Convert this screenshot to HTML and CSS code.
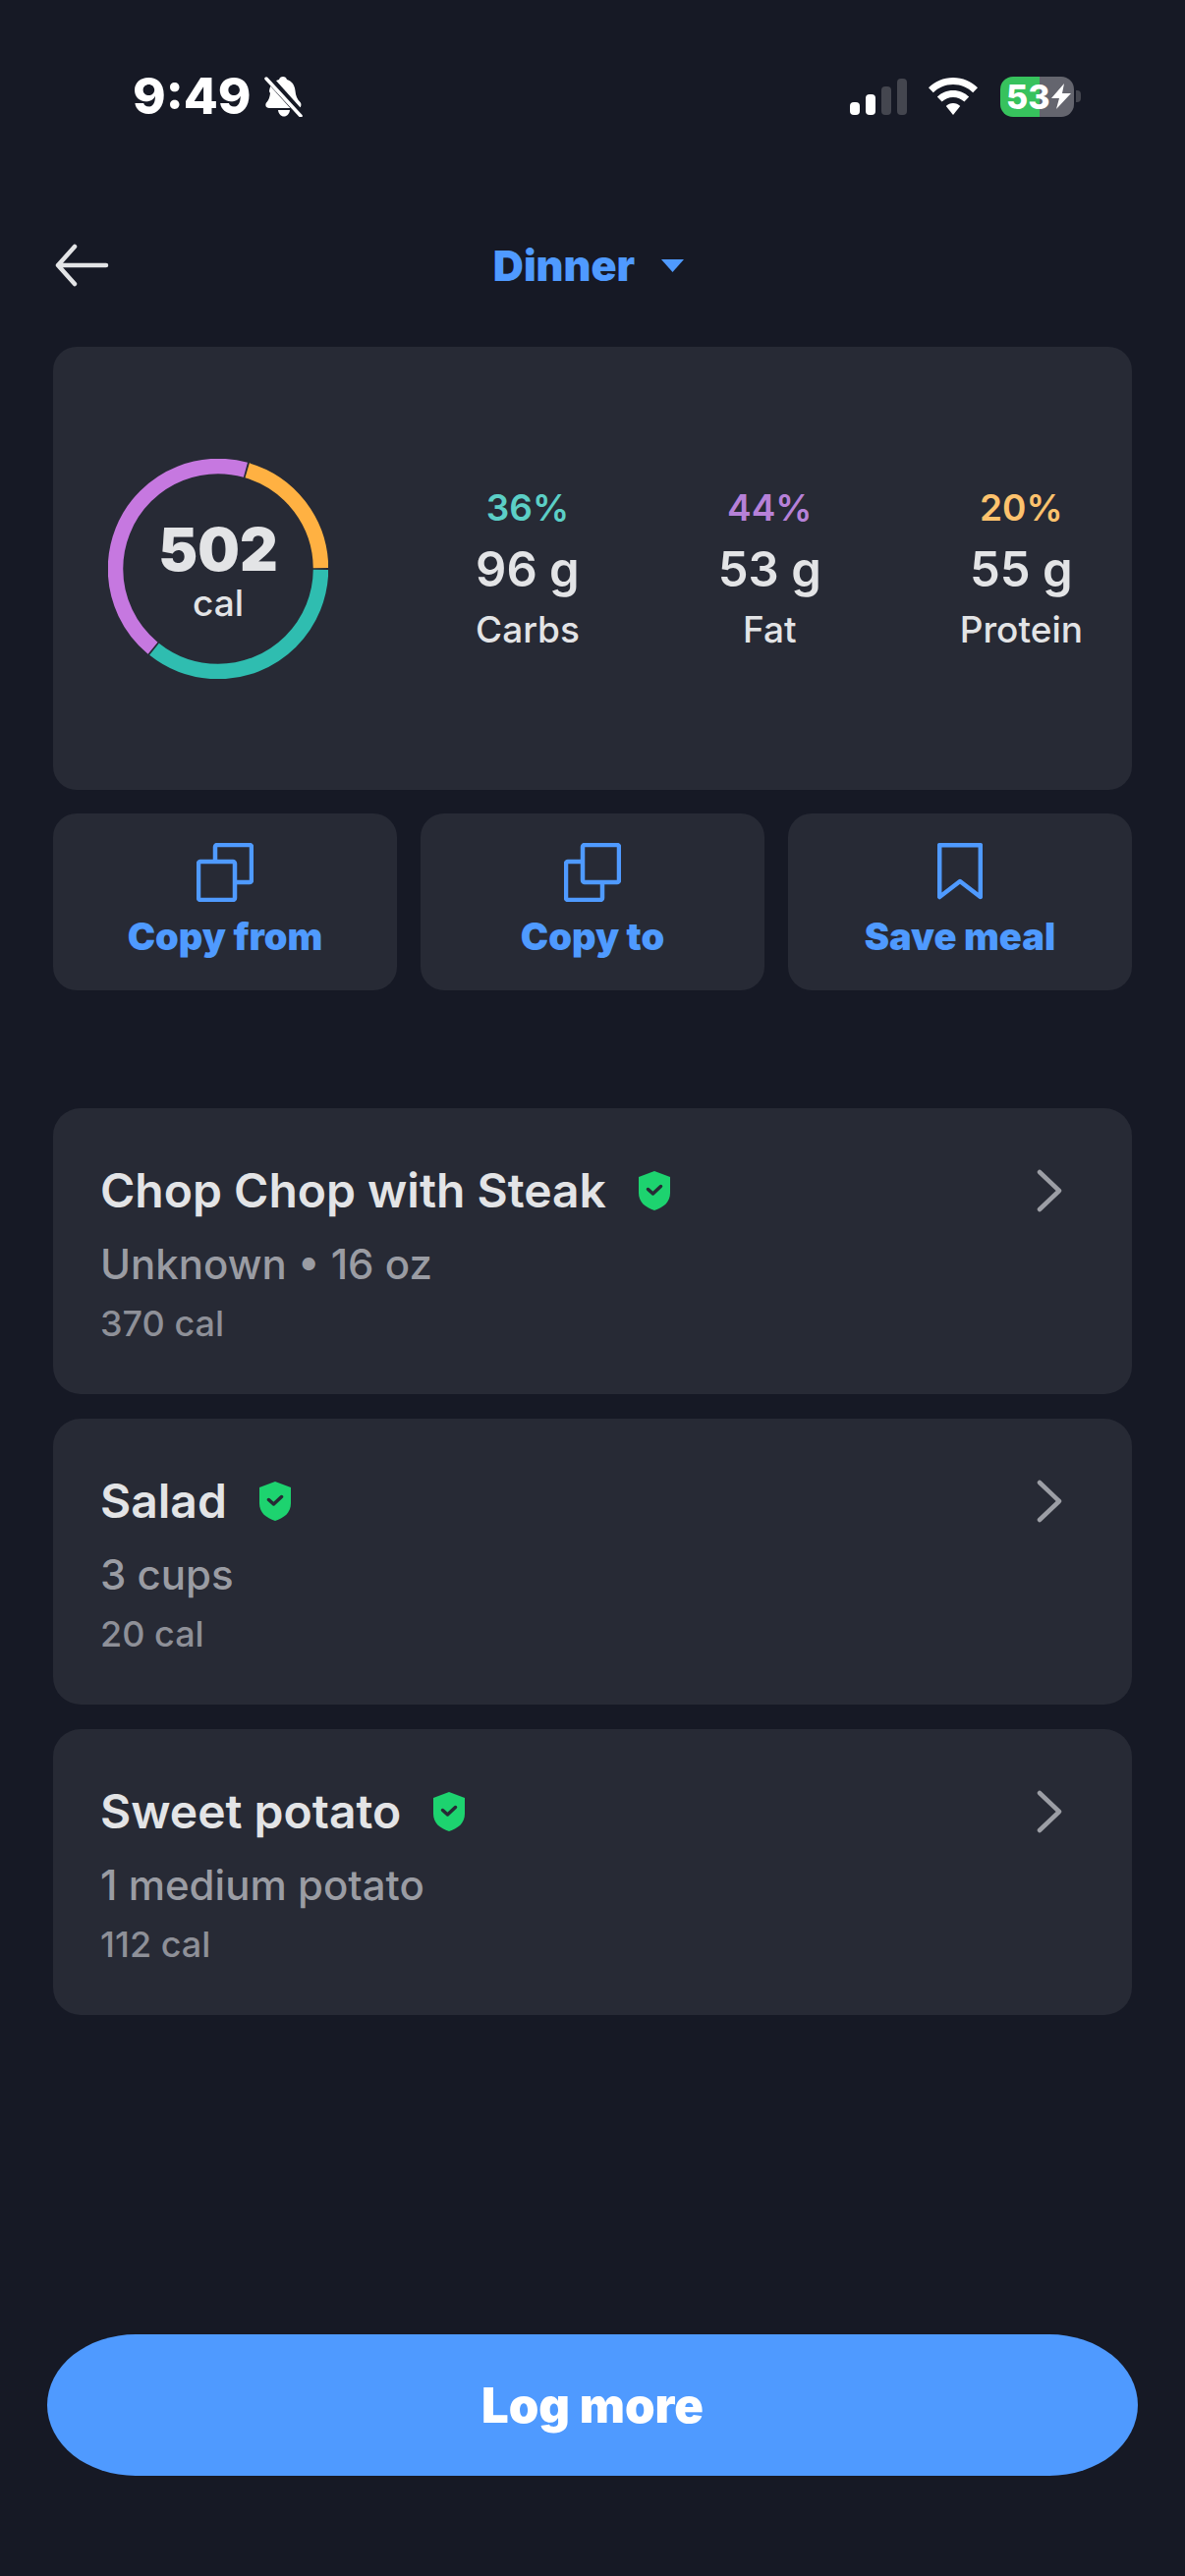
FILE: index.html
```html
<!DOCTYPE html>
<html lang="en">

<head>
  <meta charset="UTF-8">
  <meta name="viewport" content="width=device-width, initial-scale=1.0">
  <title>Dinner</title>
  <link rel="stylesheet" href="styles.css">
</head>

<body>
  <div class="page">

    <div class="status-bar">
      <div class="status-left">
        <span class="time">9:49</span>
        <svg class="bell" width="40" height="42" viewBox="0 0 40 42">
          <path d="M19 1c2 0 3.500 1.300 4 3 5.500 1.800 8 6 8.500 11.500.4 5 2 8.500 5 11.500 1.500 1.500 1.500 6-2 6H5c-4 0-4.500-4-2.500-6C4.500 25 5.500 22 6 18l-1-2c.6-5.500 3.500-10 10-12 .5-1.700 2-3 4-3zM14 35h12c-.5 4-3 6.500-6 6.500S14.500 39 14 35z" fill="#fff"/>
          <path d="M3 1l35 39" stroke="#161925" stroke-width="8"/>
          <path d="M2 3l35 38" stroke="#fff" stroke-width="3.500" stroke-linecap="round"/>
        </svg>
      </div>
      <div class="status-right">
        <div class="signal">
          <span class="bar on bar-1"></span>
          <span class="bar on bar-2"></span>
          <span class="bar bar-3"></span>
          <span class="bar bar-4"></span>
        </div>
        <svg class="wifi" width="50" height="38" viewBox="0 0 50 38">
          <path d="M25 0c9.800 0 18.600 3.900 25 10.300l-4.800 5C40.100 10.100 33 7 25 7S9.900 10.100 4.800 15.300L0 10.300C6.400 3.900 15.200 0 25 0z" fill="#fff"/>
          <path d="M25 13c6.300 0 12 2.500 16.200 6.600l-4.800 5C33.400 21.700 29.400 20 25 20s-8.400 1.700-11.400 4.600l-4.800-5C13 15.500 18.700 13 25 13z" fill="#fff"/>
          <path d="M25 26c2.800 0 5.300 1.100 7.200 2.900L25 38l-7.200-9.100c1.900-1.800 4.400-2.900 7.200-2.900z" fill="#fff"/>
        </svg>
        <div class="battery">
          <span class="battery-num">53</span>
          <svg class="bolt" width="20" height="28" viewBox="0 0 20 26">
            <path d="M13 0L0 15h8l-3 11L20 10h-9z" fill="#fff"/>
          </svg>
        </div>
        <span class="battery-nub"></span>
      </div>
    </div>

    <div class="nav">
      <svg class="back" width="56" height="44" viewBox="0 0 56 44">
        <path d="M53 22H4M21 3L4 22l17 19" fill="none" stroke="#e3e4e6" stroke-width="4.500" stroke-linecap="round" stroke-linejoin="round"/>
      </svg>
      <div class="nav-title">
        <span>Dinner</span>
        <svg width="25" height="14" viewBox="0 0 25 14">
          <path d="M1 1h23L12.500 14z" fill="#4f9aff"/>
        </svg>
      </div>
    </div>

    <div class="summary card">
      <div class="ring">
        <svg width="224" height="224" viewBox="0 0 224 224">
          <circle class="arc" cx="112" cy="112" r="104.500" pathLength="360" stroke="#ffb142" stroke-dasharray="73 287" stroke-dashoffset="-16.500"/>
          <circle class="arc" cx="112" cy="112" r="104.500" pathLength="360" stroke="#2fbdb0" stroke-dasharray="128 232" stroke-dashoffset="-90.500"/>
          <circle class="arc" cx="112" cy="112" r="104.500" pathLength="360" stroke="#c678e0" stroke-dasharray="156 204" stroke-dashoffset="-219.500"/>
        </svg>
        <div class="ring-text">
          <div class="ring-num">502</div>
          <div class="ring-unit">cal</div>
        </div>
      </div>
      <div class="macros">
        <div class="macro">
          <div class="pct teal">36%</div>
          <div class="grams">96 g</div>
          <div class="macro-name">Carbs</div>
        </div>
        <div class="macro">
          <div class="pct purple">44%</div>
          <div class="grams">53 g</div>
          <div class="macro-name">Fat</div>
        </div>
        <div class="macro">
          <div class="pct orange">20%</div>
          <div class="grams">55 g</div>
          <div class="macro-name">Protein</div>
        </div>
      </div>
    </div>

    <div class="actions">
      <div class="action card">
        <svg width="58" height="60" viewBox="0 0 58 60">
          <rect x="19" y="2" width="37" height="38" rx="2" fill="none" stroke="#4f9aff" stroke-width="4.500"/>
          <rect x="2" y="19" width="37" height="39" rx="2" fill="#272a35" stroke="#4f9aff" stroke-width="4.500"/>
        </svg>
        <span>Copy from</span>
      </div>
      <div class="action card">
        <svg width="58" height="60" viewBox="0 0 58 60">
          <rect x="2" y="19" width="37" height="39" rx="2" fill="none" stroke="#4f9aff" stroke-width="4.500"/>
          <rect x="19" y="2" width="37" height="38" rx="2" fill="#272a35" stroke="#4f9aff" stroke-width="4.500"/>
        </svg>
        <span>Copy to</span>
      </div>
      <div class="action card">
        <svg width="46" height="60" viewBox="0 0 46 60">
          <path d="M2.200 2.200h41.600V55L23 39 2.200 55z" fill="none" stroke="#4f9aff" stroke-width="4.500" stroke-linejoin="round"/>
        </svg>
        <span>Save meal</span>
      </div>
    </div>

    <div class="foods">
      <div class="food card">
        <div class="food-info">
          <div class="food-title">
            <span>Chop Chop with Steak</span>
            <svg class="shield" width="34" height="40" viewBox="0 0 34 40">
              <path d="M17 0l16 6v16c0 10-7 15-16 18C8 37 1 32 1 22V6z" fill="#1dd36f"/>
              <path d="M10.500 18.500l5 4.500 8-7.500" fill="none" stroke="#272a35" stroke-width="3.500" stroke-linecap="round" stroke-linejoin="round"/>
            </svg>
          </div>
          <div class="food-sub">Unknown • 16 oz</div>
          <div class="food-cal">370 cal</div>
        </div>
        <svg class="chevron" width="28" height="44" viewBox="0 0 28 44">
          <path d="M4 3l20 19L4 41" fill="none" stroke="#9c9ea5" stroke-width="4.500" stroke-linecap="round" stroke-linejoin="round"/>
        </svg>
      </div>
      <div class="food card">
        <div class="food-info">
          <div class="food-title">
            <span>Salad</span>
            <svg class="shield" width="34" height="40" viewBox="0 0 34 40">
              <path d="M17 0l16 6v16c0 10-7 15-16 18C8 37 1 32 1 22V6z" fill="#1dd36f"/>
              <path d="M10.500 18.500l5 4.500 8-7.500" fill="none" stroke="#272a35" stroke-width="3.500" stroke-linecap="round" stroke-linejoin="round"/>
            </svg>
          </div>
          <div class="food-sub">3 cups</div>
          <div class="food-cal">20 cal</div>
        </div>
        <svg class="chevron" width="28" height="44" viewBox="0 0 28 44">
          <path d="M4 3l20 19L4 41" fill="none" stroke="#9c9ea5" stroke-width="4.500" stroke-linecap="round" stroke-linejoin="round"/>
        </svg>
      </div>
      <div class="food card">
        <div class="food-info">
          <div class="food-title">
            <span>Sweet potato</span>
            <svg class="shield" width="34" height="40" viewBox="0 0 34 40">
              <path d="M17 0l16 6v16c0 10-7 15-16 18C8 37 1 32 1 22V6z" fill="#1dd36f"/>
              <path d="M10.500 18.500l5 4.500 8-7.500" fill="none" stroke="#272a35" stroke-width="3.500" stroke-linecap="round" stroke-linejoin="round"/>
            </svg>
          </div>
          <div class="food-sub">1 medium potato</div>
          <div class="food-cal">112 cal</div>
        </div>
        <svg class="chevron" width="28" height="44" viewBox="0 0 28 44">
          <path d="M4 3l20 19L4 41" fill="none" stroke="#9c9ea5" stroke-width="4.500" stroke-linecap="round" stroke-linejoin="round"/>
        </svg>
      </div>
    </div>

    <div class="log-btn">Log more</div>

  </div>
</body>

</html>
```

FILE: styles.css
```css
* {
  box-sizing: border-box;
}

body {
  margin: 0;
  background-color: #161925;
  font-family: Inter, "Noto Sans", sans-serif;
  color: #e3e4e6;
}

.page {
  width: 1206px;
  height: 2622px;
  display: flex;
  flex-direction: column;
  padding-top: 77px;
}

.card {
  background-color: #272a35;
}

/* status bar */
.status-bar {
  height: 42px;
  display: flex;
  justify-content: space-between;
  padding: 0 106px 0 135px;
}

.status-left {
  display: flex;
  align-items: center;
  gap: 13px;
}

.time {
  font-size: 51px;
  font-weight: 800;
  line-height: 42px;
  color: #fff;
}

.status-right {
  display: flex;
  align-items: center;
  position: relative;
}

.signal {
  display: flex;
  align-items: flex-end;
  gap: 6px;
  height: 37px;
  margin-right: 22px;
}

.bar {
  width: 10px;
  border-radius: 4px;
  background-color: #44464f;
}

.bar.on {
  background-color: #fff;
}

.bar-1 { height: 13px; }
.bar-2 { height: 21px; }
.bar-3 { height: 29px; }
.bar-4 { height: 37px; }

.wifi {
  margin-right: 23px;
}

.battery {
  width: 75px;
  height: 41px;
  border-radius: 13px;
  background: linear-gradient(90deg, #37c25d 0, #37c25d 40px, #64656e 40px);
  display: flex;
  align-items: center;
  padding-left: 6px;
}

.battery-num {
  font-size: 34px;
  font-weight: 800;
  color: #fff;
  line-height: 41px;
}

.bolt {
  margin-left: 1px;
}

.battery-nub {
  width: 5px;
  height: 12px;
  margin-left: 2px;
  border-radius: 0 4px 4px 0;
  background-color: #44464f;
}

/* nav */
.nav {
  height: 44px;
  margin-top: 129px;
  position: relative;
  display: flex;
  justify-content: center;
  align-items: center;
}

.back {
  position: absolute;
  left: 55px;
  top: 0;
}

.nav-title {
  display: flex;
  align-items: center;
  gap: 26px;
  font-size: 43px;
  font-weight: 900;
  color: #4f9aff;
  margin-left: -7px;
}

/* summary */
.summary {
  height: 451px;
  margin: 61px 54px 0;
  padding: 0 50px 0 56px;
  border-radius: 24px;
  display: flex;
  align-items: center;
  justify-content: space-between;
}

.ring {
  width: 224px;
  height: 224px;
  position: relative;
}

.arc {
  fill: none;
  stroke-width: 15.500;
  transform: rotate(-90deg);
  transform-origin: 112px 112px;
}

.ring-text {
  position: absolute;
  inset: 0;
  padding-top: 5px;
  display: flex;
  flex-direction: column;
  align-items: center;
  justify-content: center;
}

.ring-num {
  font-size: 60px;
  font-weight: 900;
  line-height: 66px;
}

.ring-unit {
  font-size: 37px;
  font-weight: 500;
  line-height: 44px;
}

.macros {
  width: 618px;
  display: flex;
  justify-content: space-between;
}

.macro {
  display: flex;
  flex-direction: column;
  align-items: center;
}

.pct {
  font-size: 37px;
  font-weight: 600;
  line-height: 44px;
}

.teal { color: #5ccfc6; }
.purple { color: #b681d8; }
.orange { color: #fdc26d; }

.grams {
  font-size: 49px;
  font-weight: 600;
  line-height: 62px;
  margin-top: 10px;
}

.macro-name {
  font-size: 37px;
  font-weight: 500;
  line-height: 44px;
  margin-top: 8px;
}

/* copy / save buttons */
.actions {
  display: grid;
  grid-template-columns: repeat(3, 1fr);
  gap: 24px;
  margin: 24px 54px 0;
}

.action {
  height: 180px;
  border-radius: 24px;
  display: flex;
  flex-direction: column;
  align-items: center;
  padding-top: 30px;
  font-size: 38px;
  font-weight: 900;
  line-height: 44px;
  color: #4f9aff;
}

.action span {
  margin-top: 13px;
}

/* foods */
.foods {
  display: flex;
  flex-direction: column;
  gap: 25px;
  margin: 120px 54px 0;
}

.food {
  height: 291px;
  border-radius: 28px;
  padding: 54px 70px 0 48px;
  display: flex;
  justify-content: space-between;
  align-items: flex-start;
}

.food-title {
  display: flex;
  align-items: center;
  gap: 32px;
  font-size: 48px;
  font-weight: 600;
  line-height: 60px;
}

.food-sub {
  font-size: 42px;
  font-weight: 500;
  line-height: 50px;
  color: #9a9ca3;
  margin-top: 20px;
}

.food-cal {
  font-size: 36px;
  font-weight: 500;
  line-height: 44px;
  color: #8e9098;
  margin-top: 13px;
}

.chevron {
  margin-top: 8px;
}

/* bottom button */
.log-btn {
  height: 144px;
  margin: auto 48px 102px;
  border-radius: 90px / 72px;
  background-color: #4f9aff;
  color: #fff;
  font-size: 49px;
  font-weight: 900;
  display: flex;
  align-items: center;
  justify-content: center;
}
```
